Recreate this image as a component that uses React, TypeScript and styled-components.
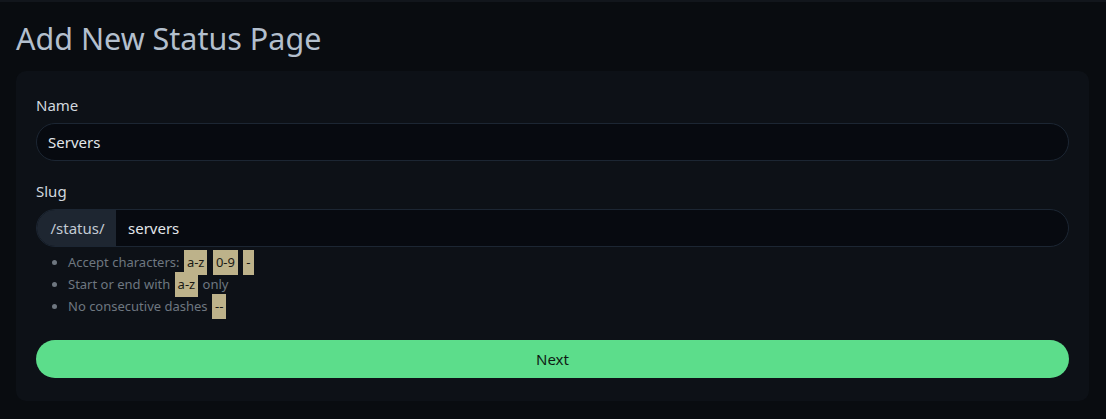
import * as React from "react";
import styled, { createGlobalStyle } from "styled-components";

const GlobalStyle = createGlobalStyle`
  html, body {
    margin: 0;
    padding: 0;
    background: #090c10;
    font-family: "Noto Sans", "Open Sans", "Liberation Sans", sans-serif;
    color: #dee2e6;
  }
  * { box-sizing: border-box; }
`;

const Page = styled.div`
  min-height: 419px;
  border-top: 2px solid #12161c;
  padding: 0 17px 0 16px;
`;

const Title = styled.h1`
  margin: 0;
  padding: 16px 0 13px;
  font-size: 30.5px;
  font-weight: 400;
  line-height: 40px;
  color: #b3bfcd;
`;

const Card = styled.div`
  background: #0d1117;
  border-radius: 10px;
  padding: 23px 20px 23px;
  display: flex;
  flex-direction: column;
`;

const Field = styled.div`
  display: flex;
  flex-direction: column;
  margin-bottom: ${({ $gap }: { $gap?: number }) => $gap ?? 20}px;
`;

const Label = styled.label`
  font-size: 15px;
  line-height: 22px;
  color: #d1d7de;
  margin-bottom: 7px;
`;

const Input = styled.div`
  height: 38px;
  border: 1px solid #1c2633;
  border-radius: 19px;
  background: #070a10;
  padding: 0 11px;
  display: flex;
  align-items: center;
  font-size: 15px;
  color: #e2e6ea;
`;

const Group = styled.div`
  height: 38px;
  display: flex;
  border: 1px solid #1c2633;
  border-radius: 19px;
  overflow: hidden;
  background: #070a10;
`;

const Prefix = styled.span`
  width: 79px;
  background: #1e2631;
  color: #c3cad3;
  display: flex;
  align-items: center;
  justify-content: center;
  font-size: 15px;
  padding-left: 2px;
`;

const GroupText = styled.span`
  display: flex;
  align-items: center;
  padding-left: 12px;
  font-size: 15px;
  color: #e2e6ea;
`;

const Rules = styled.ul`
  margin: 4px 0 0;
  padding-left: 32px;
  list-style: disc;
  color: #6e7780;
  font-size: 13px;
  line-height: 22px;

  li::marker {
    color: #6e7780;
  }
`;

const Code = styled.code`
  font-family: inherit;
  font-size: 13px;
  background: #bdb28a;
  color: #1b1a14;
  padding: 3px 3px 4px;
  margin: 0 1px;
`;

const NextButton = styled.button`
  height: 38px;
  border: none;
  border-radius: 19px;
  background: #5cdd8b;
  color: #0f1a14;
  font-family: inherit;
  font-size: 15px;
  cursor: pointer;
`;

export default function App() {
  return (
    <>
      <GlobalStyle />
      <Page>
        <Title>Add New Status Page</Title>
        <Card>
          <Field $gap={19}>
            <Label>Name</Label>
            <Input>Servers</Input>
          </Field>
          <Field $gap={23}>
            <Label>Slug</Label>
            <Group>
              <Prefix>/status/</Prefix>
              <GroupText>servers</GroupText>
            </Group>
            <Rules>
              <li>
                Accept characters: <Code>a-z</Code> <Code>0-9</Code> <Code>-</Code>
              </li>
              <li>
                Start or end with <Code>a-z</Code> only
              </li>
              <li>
                No consecutive dashes <Code>--</Code>
              </li>
            </Rules>
          </Field>
          <NextButton>Next</NextButton>
        </Card>
      </Page>
    </>
  );
}
